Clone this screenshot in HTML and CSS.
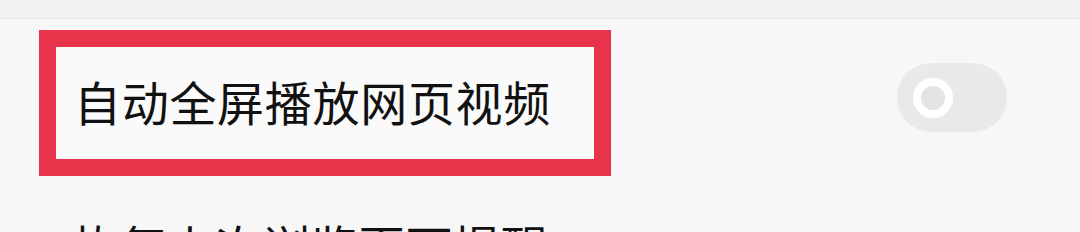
FILE: index.html
```html
<!doctype html>
<html>
<meta name="viewport" content="width=device-width, initial-scale=1">

<head>
  <title>网页设置</title>
  <link rel="stylesheet" href="styles.css">
</head>

<body>
  <div class="topbar"></div>
  <div class="list">
    <div class="row first">
      <div class="mark">
        <span class="label">自动全屏播放网页视频</span>
      </div>
      <div class="switch">
        <span class="knob"></span>
      </div>
    </div>
    <div class="row">
      <span class="label small">恢复上次浏览页面提醒</span>
    </div>
  </div>
</body>

</html>
```

FILE: styles.css
```css
/* page */
body {
  margin: 0;
  background: #f7f7f8;
  font-family: "Noto Sans CJK SC", "Noto Sans", sans-serif;
  color: #111;
  height: 232px;
  overflow: hidden;
}

.topbar {
  height: 18px;
  background: #f1f1f1;
  border-bottom: 1px solid #ececec;
}

.list {
  padding-left: 39px;
  padding-right: 73px;
}

.row {
  display: flex;
  align-items: center;
  justify-content: space-between;
}

.row.first {
  margin-top: 11px;
  align-items: flex-start;
}

/* red annotation box round the first setting */
.mark {
  width: 520px;
  height: 112px;
  padding-left: 18px;
  border: 17px solid #e7344a;
  background: #fafafa;
  display: flex;
  align-items: center;
}

.label {
  font-size: 47px;
  line-height: 1;
  letter-spacing: 0.7px;
  white-space: nowrap;
  margin-top: -5px;
}

.label.small {
  font-size: 47px;
  letter-spacing: 0.5px;
  margin-top: 45px;
  margin-left: 34px;
}

/* toggle, off state */
.switch {
  width: 110px;
  height: 69px;
  margin-top: 33px;
  border-radius: 35px;
  background: #e9e9e9;
  display: flex;
  align-items: center;
  padding-left: 16px;
  box-sizing: border-box;
}

.knob {
  width: 24px;
  height: 24px;
  border: 8px solid #fff;
  border-radius: 50%;
  background: #e4e4e4;
}
```
